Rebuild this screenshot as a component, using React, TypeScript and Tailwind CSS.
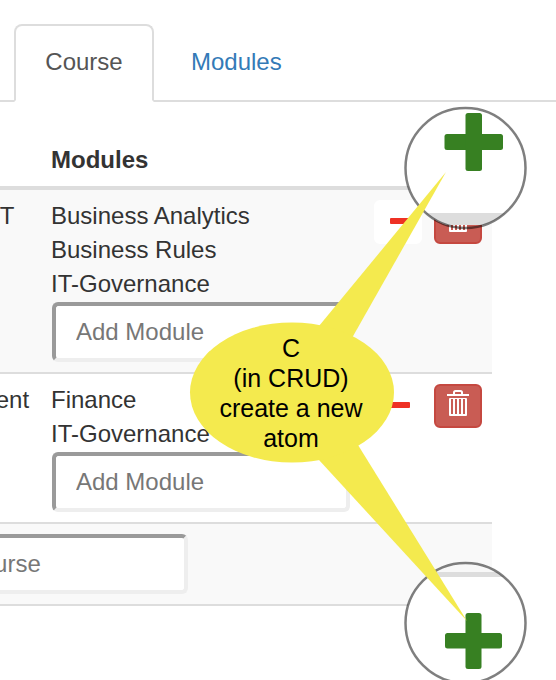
import React from "react";

function TrashIcon() {
  return (
    <svg width="24" height="28" viewBox="0 0 24 28" aria-hidden="true">
      <path d="M8 7V4.500Q8 3 9.500 3h5Q16 3 16 4.500V7" fill="none" stroke="#fff" strokeWidth="2" />
      <rect x="1" y="6" width="22" height="2" fill="#fff" />
      <rect x="3" y="10" width="18" height="18" rx="1" fill="#fff" />
      <path d="M6 11v15M10 11v15M14 11v15M18 11v15" stroke="#c95c54" strokeWidth="2" />
    </svg>
  );
}

function RowActions() {
  return (
    <div className="flex justify-end gap-3 pt-px">
      <button type="button" aria-label="Remove" className="flex h-11 w-12 items-center justify-center rounded-md bg-white pb-0.5 pl-1">
        <span className="h-1.5 w-5 rounded-[1px] bg-[#ee3124]" />
      </button>
      <button
        type="button"
        aria-label="Delete"
        className="flex h-11 w-12 items-start justify-center rounded-md border-2 border-[#c54840] bg-[#c95c54] pt-0.5"
      >
        <TrashIcon />
      </button>
    </div>
  );
}

function AddBox({ label }: { label: string }) {
  return (
    <input
      type="text"
      aria-label={label}
      placeholder={label}
      className="mt-px ml-px block h-15 w-[298px] rounded-md border-4 border-t-[#9a9a9a] border-r-[#eee] border-b-[#eee] border-l-[#9a9a9a] bg-white px-5 placeholder:text-[#777]"
    />
  );
}

const courses = [
  { name: "Business IT", modules: ["Business Analytics", "Business Rules", "IT-Governance"] },
  { name: "Management", modules: ["Finance", "IT-Governance"] },
];

function Callout() {
  return (
    <div className="pointer-events-none absolute top-0 left-0">
      <svg width="540" height="690" viewBox="0 0 540 690" aria-hidden="true">
        <defs>
          <clipPath id="lens-top">
            <circle cx="465.500" cy="168" r="60" />
          </clipPath>
          <clipPath id="lens-bottom">
            <circle cx="465.500" cy="623" r="60" />
          </clipPath>
        </defs>
        <g clipPath="url(#lens-top)">
          <rect x="400" y="100" width="130" height="125" fill="#fff" />
          <rect x="400" y="213" width="130" height="12" fill="#ddd" />
        </g>
        <circle cx="465.500" cy="168" r="60" fill="none" stroke="#000" strokeOpacity="0.5" strokeWidth="2.500" />
        <g clipPath="url(#lens-bottom)">
          <rect x="400" y="560" width="130" height="130" fill="#fff" />
          <rect x="400" y="560" width="130" height="12" fill="#f8f8f8" />
          <rect x="400" y="572" width="130" height="5" fill="#ddd" />
        </g>
        <circle cx="465.500" cy="623" r="60" fill="none" stroke="#000" strokeOpacity="0.5" strokeWidth="2.500" />
        <g fill="#378022">
          <rect x="444.500" y="134" width="58.500" height="16" rx="2.500" />
          <rect x="465.500" y="113" width="16.500" height="58" rx="2.500" />
          <rect x="445" y="633" width="57" height="15.500" rx="2.500" />
          <rect x="465.500" y="613" width="16" height="56" rx="2.500" />
        </g>
        <g fill="#f4ea4e">
          <path d="M319 326 446 172 352 338 330 360Z" />
          <path d="M319 460 467 621 358 445 330 420Z" />
          <ellipse cx="292" cy="392.500" rx="102" ry="70" />
        </g>
      </svg>
      <p className="absolute top-[333px] left-[189px] w-[204px] text-center text-[25px] leading-[30px] text-black">
        C<br />
        (in CRUD)
        <br />
        create a new
        <br />
        atom
      </p>
    </div>
  );
}

export default function App() {
  return (
    <div className="relative h-screen overflow-hidden bg-white font-['Liberation_Sans',Arial,sans-serif] text-2xl leading-[34px] text-[#333]">
      <nav className="flex border-b-2 border-[#ddd] pt-6 pl-3.5">
        <a
          href="#course"
          className="-mb-0.5 flex h-[78px] w-[140px] items-center justify-center rounded-t-lg border-2 border-[#ddd] border-b-white bg-white pb-0.5 text-[#555]"
        >
          Course
        </a>
        <a href="#modules" className="flex h-[76px] items-center px-[37px] text-[#337ab7]">
          Modules
        </a>
      </nav>
      <div className="mr-16 -ml-[121px] pt-8">
        <table className="w-full table-fixed border-separate border-spacing-0">
          <colgroup>
            <col className="w-[162px]" />
            <col />
            <col className="w-32" />
          </colgroup>
          <thead>
            <tr className="text-left">
              <th className="border-b-4 border-[#ddd] px-2.5 py-[9px]">Course</th>
              <th className="border-b-4 border-[#ddd] px-2.5 py-[9px]">Modules</th>
              <th className="border-b-4 border-[#ddd]" />
            </tr>
          </thead>
          <tbody>
            {courses.map((course) => (
              <tr key={course.name} className="align-top odd:bg-[#f9f9f9]">
                <td className="border-b-2 border-[#ddd] px-2.5 pt-[9px] pb-2.5 whitespace-nowrap">{course.name}</td>
                <td className="border-b-2 border-[#ddd] px-2.5 pt-[9px] pb-2.5">
                  <ul className="whitespace-nowrap">
                    {course.modules.map((name) => (
                      <li key={name}>{name}</li>
                    ))}
                  </ul>
                  <AddBox label="Add Module" />
                </td>
                <td className="border-b-2 border-[#ddd] px-2.5 pt-[9px] pb-2.5">
                  <RowActions />
                </td>
              </tr>
            ))}
            <tr className="bg-[#f9f9f9]">
              <td colSpan={3} className="border-b-2 border-[#ddd] px-2.5 pt-[9px] pb-2.5">
                <AddBox label="Add Course" />
              </td>
            </tr>
          </tbody>
        </table>
      </div>
      <Callout />
    </div>
  );
}
